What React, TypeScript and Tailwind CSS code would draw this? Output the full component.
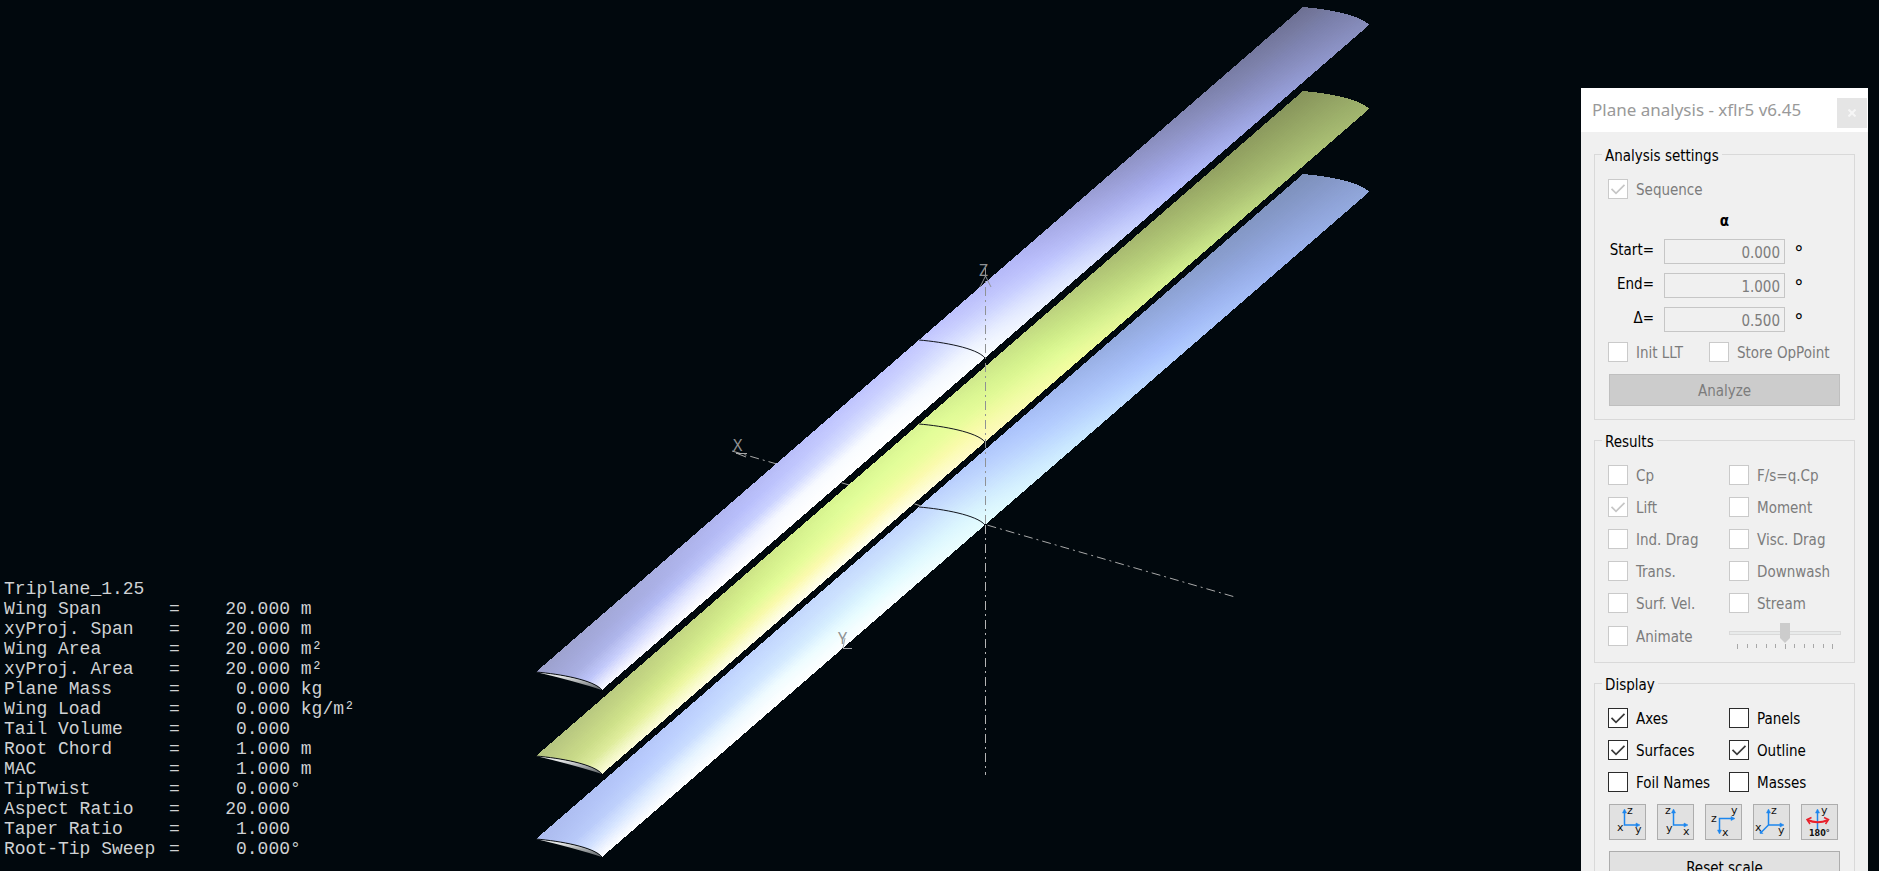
import { useId, type ReactNode } from 'react';

type RGB = [number, number, number];
type Point = [number, number];

const hex = (c: string): RGB => [
  parseInt(c.slice(0, 2), 16),
  parseInt(c.slice(2, 4), 16),
  parseInt(c.slice(4, 6), 16),
];

const mix = (a: RGB, b: RGB, k: number): RGB => [
  a[0] + (b[0] - a[0]) * k,
  a[1] + (b[1] - a[1]) * k,
  a[2] + (b[2] - a[2]) * k,
];

/* Shading grids: one row per span station (near tip to far tip),
   one column per chord station (trailing edge to leading edge). */
const SPAN_STOPS = [0, 0.12, 0.25, 0.38, 0.5, 0.62, 0.75, 0.88, 1];

const WING_TOP = [
  '9ca0cc a1a6d6 a8aee0 bcc3fa f8f9ff',
  'a6abdc a9afe4 b4bcf6 dde2ff ffffff',
  'b2b7f2 b9bffc c9d0ff f6f9ff ffffff',
  'bec3fe c8ceff dae1ff f9fcff ffffff',
  'c3c7ff cdd3ff dce3ff eff4ff fafdff',
  'b4b8f7 b9bdfb c1c7ff d0d8ff e2eaff',
  '9397cb 999ed6 a0a5e3 a9b0f2 b6bffe',
  '7c80aa 8186b2 888dbf 9097cd 9aa2df',
  '6d7093 73779c 797ea8 7f84b1 878dbc',
];
const WING_MIDDLE = [
  'b4c380 bfce84 c8d988 d9e899 fbfcd8',
  'bccd80 c6d984 d4e98b ecf7a0 fffde0',
  'cae084 d4ee8b e0fb96 fafaaa fffef0',
  'd8f590 e0fd98 ecfe9e fdfab2 fffff0',
  'daf594 e2fd98 e9fd9c f8fba8 fffac0',
  'c8e086 cdea88 d6f48e e2fc97 f3fd9f',
  'abbe72 b1c776 b9d17b c4df83 d4f190',
  '93a262 99ab66 a1b46c aabf73 b6cf7c',
  '86945b 8c9b5f 93a364 99ab68 a0b36d',
];
const WING_BOTTOM = [
  'acbbee b0c0f2 b7c8f9 d0dfff ffffff',
  'b3c5f8 b9ccfe c5d8ff e6f3ff ffffff',
  'bfd2fe c7dcff d2e7ff f0fcff ffffff',
  'c6dafd cde2fe d6f0fe e6fdff fafeff',
  'c0d4fe c8defe d2eafe dbf6fe e4fdfe',
  'abc2fa b0c8fe b7d0ff c0dcff ccebff',
  '95abdf 9ab1e8 a0b8f2 a7c0fd b3ceff',
  '879bca 8b9fd1 90a5db 96ace6 9eb5f2',
  '7d90bb 8194c1 8699c9 8b9fd1 90a6d9',
];

const SPAN: Point = [767, -665];
const ARC = 'c24 2 58 8 66 18';
const STRIPS = 30;

const arcPoint = (t: number): Point => {
  const u = 1 - t;
  return [
    3 * u * u * t * 24 + 3 * u * t * t * 58 + t * t * t * 66,
    3 * u * u * t * 2 + 3 * u * t * t * 8 + t * t * t * 18,
  ];
};

function Wing({ x, y, shading, name }: { x: number; y: number; shading: string[]; name: string }) {
  const rows = shading.map((r) => r.split(' ').map(hex));
  const strips = Array.from({ length: STRIPS }, (_, i) => {
    const a = arcPoint(i / STRIPS);
    const b = arcPoint(Math.min(1, (i + 2) / STRIPS));
    const pos = Math.min(3.999, (a[0] / 66) * 4);
    const col = Math.floor(pos);
    return {
      id: `${name}-${i}`,
      from: [x + a[0], y + a[1]] as Point,
      points: [
        [x + a[0], y + a[1]],
        [x + b[0], y + b[1]],
        [x + b[0] + SPAN[0], y + b[1] + SPAN[1]],
        [x + a[0] + SPAN[0], y + a[1] + SPAN[1]],
      ]
        .map((p) => p.join(','))
        .join(' '),
      colors: rows.map((r) => {
        const c = mix(r[col], r[col + 1], pos - col).map(Math.round);
        return `rgb(${c.join(',')})`;
      }),
    };
  });
  return (
    <g>
      <defs>
        {strips.map((s) => (
          <linearGradient
            key={s.id}
            id={s.id}
            gradientUnits="userSpaceOnUse"
            x1={s.from[0]}
            y1={s.from[1]}
            x2={s.from[0] + SPAN[0]}
            y2={s.from[1] + SPAN[1]}
          >
            {s.colors.map((c, k) => (
              <stop key={k} offset={SPAN_STOPS[k]} stopColor={c} />
            ))}
          </linearGradient>
        ))}
        <linearGradient id={`${name}-cap`} x1="0" y1="0" x2="0.15" y2="1">
          <stop offset="0.3" stopColor="#e4e6e6" />
          <stop offset="1" stopColor="#6c7174" />
        </linearGradient>
      </defs>
      <g shapeRendering="crispEdges">
        {strips.map((s) => (
          <polygon key={s.id} points={s.points} fill={`url(#${s.id})`} />
        ))}
      </g>
      <path d={`M${x} ${y}${ARC}q-28 -9 -66 -18z`} fill={`url(#${name}-cap)`} />
      <path d={`M${x} ${y}${ARC}`} fill="none" stroke="#0c1014" />
      <path d={`M${x + 383} ${y - 332}${ARC}`} fill="none" stroke="#10141c" />
    </g>
  );
}

function Scene() {
  return (
    <svg
      viewBox="0 0 1879 871"
      preserveAspectRatio="xMidYMid slice"
      className="absolute inset-0 h-full w-full"
      role="img"
      aria-label="3D view"
    >
      <g stroke="#a8a8a8" fill="none">
        <path d="M732 451L1235 597" strokeDasharray="9 4 2 4" />
        <path d="M736 453.500l11 0M736 453l10 4" />
      </g>
      <Wing x={536} y={839} shading={WING_BOTTOM} name="bottom" />
      <Wing x={536} y={756} shading={WING_MIDDLE} name="middle" />
      <Wing x={536} y={672} shading={WING_TOP} name="top" />
      <g stroke="#8f9294" fill="none">
        <path d="M985.500 268V525" strokeDasharray="9 4 2 4" />
        <path d="M980 287L985.500 276L991 287" />
        <path d="M985.500 525V775" stroke="#b4b4b4" strokeDasharray="9 4 2 4" />
        <path d="M843 648.500h9M843 648l2 -10" stroke="#a4a6a8" />
      </g>
      <g fill="#8f9294" className="font-['Noto_Sans',sans-serif] text-[16px]">
        <text x="979" y="276">Z</text>
        <text x="733" y="451">X</text>
        <text x="838" y="644">Y</text>
      </g>
    </svg>
  );
}

const PROPERTIES: [string, string, string][] = [
  ['Wing Span', '20.000', ' m'],
  ['xyProj. Span', '20.000', ' m'],
  ['Wing Area', '20.000', ' m²'],
  ['xyProj. Area', '20.000', ' m²'],
  ['Plane Mass', '0.000', ' kg'],
  ['Wing Load', '0.000', ' kg/m²'],
  ['Tail Volume', '0.000', ''],
  ['Root Chord', '1.000', ' m'],
  ['MAC', '1.000', ' m'],
  ['TipTwist', '0.000', '°'],
  ['Aspect Ratio', '20.000', ''],
  ['Taper Ratio', '1.000', ''],
  ['Root-Tip Sweep', '0.000', '°'],
];

function PlaneData() {
  return (
    <table className="relative mb-3 ml-1 self-end text-left font-['Liberation_Mono',monospace] text-[18px] leading-5 text-[#cfd2d4]">
      <caption className="text-left">Triplane_1.25</caption>
      <tbody>
        {PROPERTIES.map(([label, value, unit]) => (
          <tr key={label}>
            <th scope="row" className="w-[165px] p-0 font-normal whitespace-nowrap">{label}</th>
            <td className="w-[11px] p-0">=</td>
            <td className="w-[110px] p-0 text-right">{value}</td>
            <td className="p-0 whitespace-pre">{unit}</td>
          </tr>
        ))}
      </tbody>
    </table>
  );
}

function Check({ label, checked = false, disabled = false }: { label: string; checked?: boolean; disabled?: boolean }) {
  return (
    <label className={`flex h-5 items-center gap-2 whitespace-nowrap ${disabled ? 'text-[#7c7c7c]' : 'text-black'}`}>
      <span className="relative size-5 shrink-0">
        <input
          type="checkbox"
          defaultChecked={checked}
          disabled={disabled}
          className="peer block size-5 appearance-none border border-[#2b2b2b] bg-white disabled:border-[#cacaca]"
        />
        <svg
          viewBox="0 0 20 20"
          className="pointer-events-none absolute inset-0 hidden size-5 text-[#3a3a3a] peer-checked:block peer-disabled:text-[#c6c6c6]"
          fill="none"
          stroke="currentColor"
          strokeWidth="1.7"
        >
          <path d="M3.5 9.8L8 14.3L16.5 5.8" />
        </svg>
      </span>
      <span className="pt-0.5">{label}</span>
    </label>
  );
}

function Group({ title, className, children }: { title: string; className: string; children: ReactNode }) {
  return (
    <fieldset className={`min-w-0 border border-[#d9d9d9] px-[13px] ${className}`}>
      <legend className="-ml-1.5 h-5 px-[3px] pt-0.5 leading-5 text-black">{title}</legend>
      {children}
    </fieldset>
  );
}

function AngleField({ label, value }: { label: string; value: string }) {
  const id = useId();
  return (
    <div className="grid grid-cols-[46px_121px_auto] items-center gap-x-2.5">
      <label htmlFor={id} className="pb-1 text-right text-black">{label}</label>
      <input
        id={id}
        defaultValue={value}
        disabled
        className="h-[25px] w-full border border-[#c6c6c6] bg-[#f0f0f0] px-1 pt-0.5 text-right text-[#7c7c7c]"
      />
      <span className="font-['Noto_Sans',sans-serif] text-[18px] leading-5 text-black">°</span>
    </div>
  );
}

const BLUE = '#1c86ee';

function ViewButton({ label, children }: { label: string; children: ReactNode }) {
  return (
    <button type="button" aria-label={label} className="h-9 w-[37px] border border-[#adadad] bg-[#e1e1e1]">
      <svg
        viewBox="0 0 35 34"
        className="block h-full w-full overflow-visible font-['DejaVu_Sans',sans-serif] text-[11px]"
        fill="none"
        stroke={BLUE}
        strokeWidth="1.5"
      >
        {children}
      </svg>
    </button>
  );
}

function Letter({ x, y, children }: { x: number; y: number; children: string }) {
  return (
    <text x={x} y={y} fill="#111" stroke="none">
      {children}
    </text>
  );
}

function ViewButtons() {
  return (
    <div className="mt-3 flex gap-[11px]">
      <ViewButton label="View along x">
        <path d="M14.5 6V20H28" />
        <path d="M12.5 8l2-4 2 4zM26 18l4 2-4 2z" fill={BLUE} strokeWidth="0.5" />
        <Letter x={17} y={9}>z</Letter>
        <Letter x={7} y={26}>x</Letter>
        <Letter x={25} y={28}>y</Letter>
      </ViewButton>
      <ViewButton label="View along y">
        <path d="M15.5 6V20H28" />
        <path d="M13.500 8l2-4 2 4zM26 18l4 2-4 2z" fill={BLUE} strokeWidth="0.5" />
        <Letter x={7} y={9}>z</Letter>
        <Letter x={8} y={27}>y</Letter>
        <Letter x={25} y={30}>x</Letter>
      </ViewButton>
      <ViewButton label="View along z">
        <path d="M13.500 27V13.500H27" />
        <path d="M11.500 25l2 4 2-4zM25 11.500l4 2-4 2z" fill={BLUE} strokeWidth="0.5" />
        <Letter x={25} y={9}>y</Letter>
        <Letter x={5} y={17}>z</Letter>
        <Letter x={16} y={31}>x</Letter>
      </ViewButton>
      <ViewButton label="Isometric view">
        <path d="M14.500 6V20H28M14.500 20L7 27.500" />
        <path d="M12.500 8l2-4 2 4zM26 18l4 2-4 2zM6 25.500v3h3z" fill={BLUE} strokeWidth="0.5" />
        <Letter x={17} y={9}>z</Letter>
        <Letter x={1} y={26}>x</Letter>
        <Letter x={24} y={29}>y</Letter>
      </ViewButton>
      <ViewButton label="Flip view by 180 degrees">
        <path d="M15.500 6V24" />
        <path d="M13.500 8l2-4 2 4z" fill={BLUE} strokeWidth="0.5" />
        <path d="M5.500 15q10 4.500 20.500 0" stroke="#e8202a" strokeWidth="2" />
        <path d="M9.500 12.500L5 14.500L8 19M22 12.500L26.500 14.500L23.500 19" stroke="#e8202a" strokeWidth="1.500" />
        <Letter x={19} y={9}>y</Letter>
        <text x="7" y="31" fill="#111" stroke="none" className="text-[8px] font-bold">180°</text>
      </ViewButton>
    </div>
  );
}

function AnalysisPanel() {
  return (
    <aside className="relative mt-[88px] mr-[11px] ml-auto w-[287px] shrink-0 self-start bg-[#f0f0f0] font-['DejaVu_Sans_Condensed','Noto_Sans',sans-serif] text-[15px] leading-5">
      <header className="flex h-11 items-center justify-between bg-white pr-px pl-[11px]">
        <h1 className="font-['Noto_Sans',sans-serif] text-[17px] text-[#999999]">Plane analysis - xflr5 v6.45</h1>
        <button
          type="button"
          aria-label="Close"
          className="mt-1.5 flex size-[30px] items-center justify-center bg-[#e5e5e5]"
        >
          <svg viewBox="0 0 8 8" className="size-2" stroke="#f6f6f6" strokeWidth="2">
            <path d="M0.500 0.500L7.500 7.500M7.500 0.500L0.500 7.500" />
          </svg>
        </button>
      </header>

      <div className="px-[13px] pt-3 pb-4">
        <Group title="Analysis settings" className="pb-[13px]">
          <div className="pt-[15px]">
            <Check label="Sequence" checked disabled />
          </div>
          <p className="mt-3 text-center leading-5 font-bold text-black">α</p>
          <div className="mt-2 grid gap-[9px]">
            <AngleField label="Start=" value="0.000" />
            <AngleField label="End=" value="1.000" />
            <AngleField label="Δ=" value="0.500" />
          </div>
          <div className="mt-2.5 grid grid-cols-[101px_1fr]">
            <Check label="Init LLT" disabled />
            <Check label="Store OpPoint" disabled />
          </div>
          <button
            type="button"
            disabled
            className="mt-3 ml-px block h-8 w-[231px] border border-[#bfbfbf] bg-[#cccccc] pt-0.5 text-[#7c7c7c]"
          >
            Analyze
          </button>
        </Group>

        <Group title="Results" className="mt-2.5 pb-[13px]">
          <div className="grid grid-cols-[121px_1fr] gap-y-3 pt-[15px]">
            <Check label="Cp" disabled />
            <Check label="F/s=q.Cp" disabled />
            <Check label="Lift" checked disabled />
            <Check label="Moment" disabled />
            <Check label="Ind. Drag" disabled />
            <Check label="Visc. Drag" disabled />
            <Check label="Trans." disabled />
            <Check label="Downwash" disabled />
            <Check label="Surf. Vel." disabled />
            <Check label="Stream" disabled />
          </div>
          <div className="mt-2.5 grid h-[26px] grid-cols-[121px_112px] items-center">
            <Check label="Animate" disabled />
            <div className="h-[26px]">
              <input
                type="range"
                min={0}
                max={10}
                defaultValue={5}
                disabled
                aria-label="Animation speed"
                className="block h-5 w-full appearance-none bg-transparent [&::-webkit-slider-runnable-track]:h-1 [&::-webkit-slider-runnable-track]:border [&::-webkit-slider-runnable-track]:border-[#d9d9d9] [&::-webkit-slider-runnable-track]:bg-[#e8eaea] [&::-webkit-slider-thumb]:-mt-[9px] [&::-webkit-slider-thumb]:h-5 [&::-webkit-slider-thumb]:w-2.5 [&::-webkit-slider-thumb]:appearance-none [&::-webkit-slider-thumb]:bg-[#cccccc] [&::-webkit-slider-thumb]:[clip-path:polygon(0_0,100%_0,100%_75%,50%_100%,0_75%)]"
              />
              <div className="mt-px flex justify-between px-2">
                {Array.from({ length: 11 }, (_, i) => (
                  <span
                    key={i}
                    className={i % 5 === 0 ? 'h-[5px] w-px bg-[#a8a8a8]' : 'h-1 w-px bg-[#a8a8a8]'}
                  />
                ))}
              </div>
            </div>
          </div>
        </Group>

        <Group title="Display" className="mt-2.5 pb-3">
          <div className="grid grid-cols-[121px_1fr] gap-y-3 pt-[15px]">
            <Check label="Axes" checked />
            <Check label="Panels" />
            <Check label="Surfaces" checked />
            <Check label="Outline" checked />
            <Check label="Foil Names" />
            <Check label="Masses" />
          </div>
          <div className="pl-px">
            <ViewButtons />
            <button
              type="button"
              className="mt-[11px] block h-8 w-[231px] border border-[#adadad] bg-[#e1e1e1] pt-0.5 text-black"
            >
              Reset scale
            </button>
          </div>
        </Group>
      </div>
    </aside>
  );
}

export default function App() {
  return (
    <main className="relative flex h-screen overflow-hidden bg-[#01080d]">
      <Scene />
      <PlaneData />
      <AnalysisPanel />
    </main>
  );
}
